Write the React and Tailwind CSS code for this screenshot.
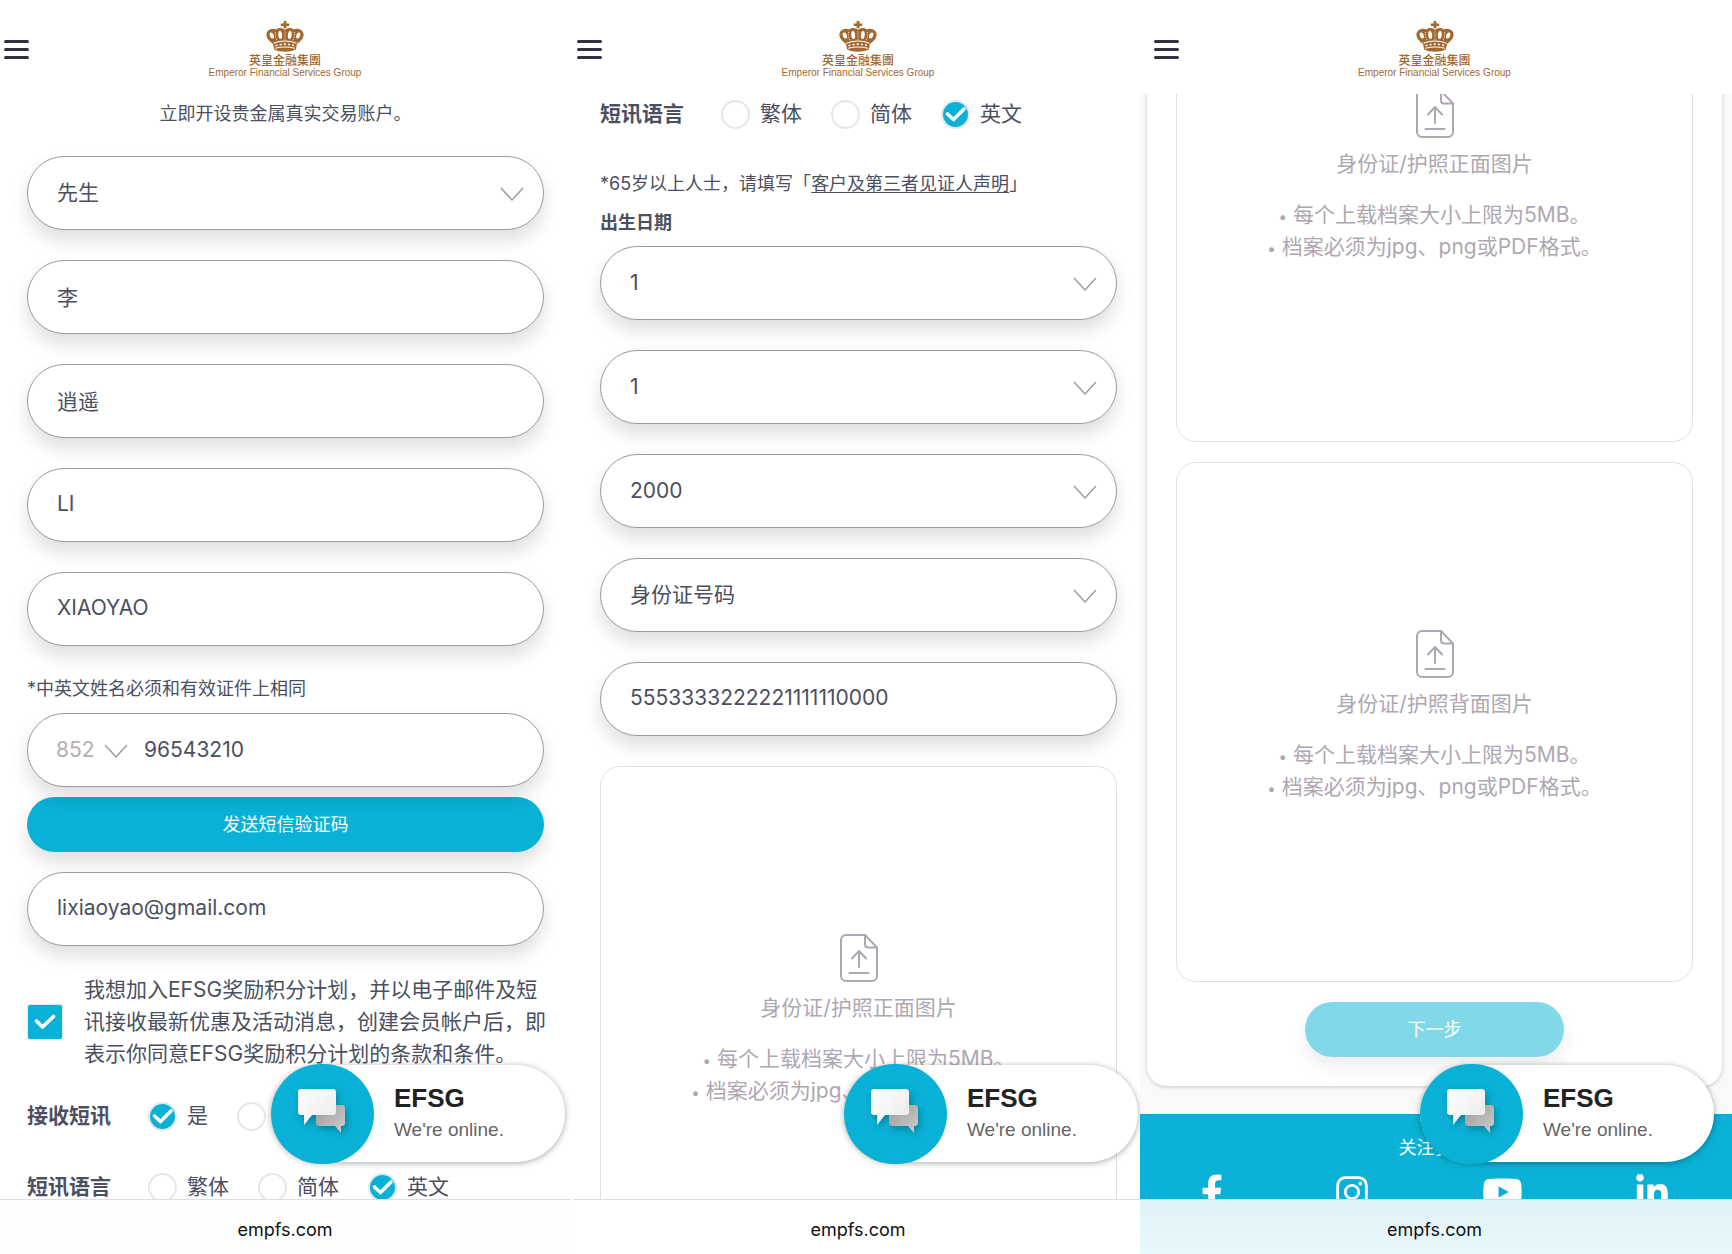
import { FaFacebookF, FaInstagram, FaYoutube, FaLinkedinIn } from "react-icons/fa";

function Crown() {
  return (
    <svg viewBox="0 0 38 31" className="h-[31px] w-[38px]" fill="#a3672f">
      <path d="M17.600 0h2.800v2.400h2.800v2.600h-2.800v2.200h-2.800V5h-2.800V2.400h2.800z" />
      {/* arches */}
      <path d="M19 9c-2-2-6-2.800-8.500-.5C7 7 2.500 7.800.8 11.500c-1.500 4 1.200 8 6.200 11.500l1.200 5.500c6 3 15.600 3 21.600 0L31 23c5-3.500 7.700-7.500 6.200-11.500C35.500 7.800 31 7 27.500 8.500C25 6.200 21 7 19 9z" />
      <g fill="#fff">
        <ellipse cx="5.800" cy="14.500" rx="1.900" ry="3.200" transform="rotate(-22 5.800 14.500)" />
        <ellipse cx="32.200" cy="14.500" rx="1.900" ry="3.200" transform="rotate(22 32.200 14.500)" />
        <ellipse cx="14.200" cy="14" rx="1.900" ry="4" transform="rotate(-6 14.200 14)" />
        <ellipse cx="23.800" cy="14" rx="1.900" ry="4" transform="rotate(6 23.800 14)" />
      </g>
      {/* pearls and band */}
      <g fill="none" stroke="#fff">
        <path d="M9.500 11c-.5 3 .2 6 1.500 8.500M28.500 11c.5 3-.2 6-1.500 8.500M19 10.500V19" strokeWidth=".8" strokeDasharray="1.200 1.200" />
        <path d="M7.500 22.300c7.500-3 15.500-3 23 0" strokeWidth="1.100" />
        <path d="M9.500 24.800c6.500-2.200 12.500-2.200 19 0" strokeWidth="1.600" strokeDasharray="2 2.200" />
        <path d="M9 27.300c6.500-1.800 13.500-1.800 20 0" strokeWidth="1" />
      </g>
    </svg>
  );
}

function Header({ className = "", menuClassName = "left-1" }) {
  return (
    <header className={`relative flex h-[94px] shrink-0 justify-center bg-white pt-[21px] text-[#a3672f] ${className}`}>
      <button type="button" aria-label="菜单" className={`absolute top-10 flex w-[25px] flex-col gap-[5px] ${menuClassName}`}>
        <span className="h-[3px] rounded-full bg-[#2d3142]" />
        <span className="h-[3px] rounded-full bg-[#2d3142]" />
        <span className="h-[3px] rounded-full bg-[#2d3142]" />
      </button>
      <a href="#home" className="flex flex-col items-center">
        <Crown />
        <span className="mt-[2px] text-[12px] leading-[14px] font-medium">英皇金融集團</span>
        <span className="font-['Liberation_Sans',sans-serif] text-[10px] leading-[10px]">Emperor Financial Services Group</span>
      </a>
    </header>
  );
}

function Chevron({ className }) {
  return (
    <svg viewBox="0 0 24 15" className={className} fill="none" stroke="#a098a4" strokeWidth="1.500">
      <path d="M1 1l11 12L23 1" />
    </svg>
  );
}

function SelectField({ label, value }) {
  return (
    <div className="relative">
      <select
        aria-label={label}
        defaultValue={value}
        className="h-[74px] w-full appearance-none rounded-full border border-[#a098a4] bg-white px-[29px] text-[21px] shadow-[0_10px_18px_rgba(0,0,0,0.13)]"
      >
        <option>{value}</option>
      </select>
      <Chevron className="pointer-events-none absolute top-[31px] right-5 h-[15px] w-6" />
    </div>
  );
}

function TextField({ label, value, type = "text" }) {
  return (
    <input
      type={type}
      aria-label={label}
      defaultValue={value}
      className="h-[74px] w-full rounded-full border border-[#a098a4] bg-white px-[29px] pb-[3px] text-[21px] shadow-[0_10px_18px_rgba(0,0,0,0.13)]"
    />
  );
}

function RadioRow({ label, name, options, checked }) {
  return (
    <fieldset className="flex h-8 items-center">
      <legend className="float-left mr-[37px] text-[21px] leading-8 font-bold">{label}</legend>
      <div className="flex gap-[29px]">
        {options.map((option) => (
          <label key={option} className="flex items-center gap-[10px] text-[21px] leading-8 whitespace-nowrap">
            <span className="relative flex size-[29px]">
              <input
                type="radio"
                name={name}
                defaultChecked={option === checked}
                className="size-full appearance-none rounded-full border-2 border-[#e2e8f0] checked:bg-[#08b1d5]"
              />
              {option === checked && (
                <svg viewBox="0 0 29 29" className="pointer-events-none absolute inset-0" fill="none" stroke="#fff" strokeWidth="3.600" strokeLinecap="round" strokeLinejoin="round">
                  <path d="M6.500 14l6 5.500L23 9" />
                </svg>
              )}
            </span>
            {option}
          </label>
        ))}
      </div>
    </fieldset>
  );
}

function UploadBox({ title }) {
  return (
    <label className="flex h-[520px] flex-col items-center rounded-[20px] border border-[#d9e2ec] bg-white pt-[167px] text-[21px] leading-8 text-[#aea7b2]">
      <input type="file" className="hidden" />
      <svg viewBox="0 0 38 48" className="h-12 w-[38px]" fill="none" stroke="#aea7b2" strokeWidth="2" strokeLinecap="round" strokeLinejoin="round">
        <path d="M25 1H6a5 5 0 0 0-5 5v36a5 5 0 0 0 5 5h26a5 5 0 0 0 5-5V13.500z" />
        <path d="M25 1v9.500a3 3 0 0 0 3 3h9" />
        <path d="M19 33V17.500M12 24.500l7-7.500 7 7.500M9.500 39h19" />
      </svg>
      <span className="mt-[10px]">{title}</span>
      <span className="mt-[19px] whitespace-nowrap"><span className="text-[15px] leading-none">•</span> 每个上载档案大小上限为5MB。</span>
      <span className="whitespace-nowrap"><span className="text-[15px] leading-none">•</span> 档案必须为jpg、png或PDF格式。</span>
    </label>
  );
}

function ChatWidget({ className }) {
  return (
    <button type="button" className={`absolute bottom-[92px] flex h-[97px] w-[294px] items-center rounded-full bg-white text-left font-['Liberation_Sans',sans-serif] shadow-[0_1px_6px_rgba(0,0,0,0.35)] ${className}`}>
      <span className="-my-1 flex h-[100px] w-[103px] shrink-0 items-center justify-center rounded-full bg-[#08b1d5]">
        <svg viewBox="0 0 60 56" className="h-14 w-[60px] drop-shadow-[2px_3px_3px_rgba(0,0,0,0.25)]">
          <defs>
            <linearGradient id="back" x1="0" y1="0" x2="1" y2="1">
              <stop offset="0" stopColor="#999" />
              <stop offset="1" stopColor="#d0d0d0" />
            </linearGradient>
            <linearGradient id="front" x1="0" y1="0" x2="1" y2="1">
              <stop offset="0" stopColor="#fff" />
              <stop offset="1" stopColor="#e9e9e9" />
            </linearGradient>
          </defs>
          <path d="M26 19h23q3 0 3 3v15q0 3-3 3h-1v7l-6-7H26q-3 0-3-3V22q0-3 3-3z" fill="url(#back)" />
          <path d="M8 3h32q3 0 3 3v20q0 3-3 3H19l-8 10V29H8q-3 0-3-3V6q0-3 3-3z" fill="url(#front)" />
        </svg>
      </span>
      <span className="ml-5 flex flex-col">
        <strong className="text-[26px] leading-8 text-[#222]">EFSG</strong>
        <span className="text-[19px] leading-8 text-[#666]">We're online.</span>
      </span>
    </button>
  );
}

function AddressBar({ className }) {
  return <footer className={`flex h-[55px] shrink-0 items-center justify-center border-t pt-1 text-[18px] text-[#111] ${className}`}>empfs.com</footer>;
}

function PersonalScreen() {
  return (
    <section className="relative flex min-w-0 flex-col bg-white pr-[3px]">
      <Header />
      <main className="min-h-0 flex-1 overflow-hidden pr-[26px] pl-[27px]">
        <p className="mt-1 text-center text-[18px] leading-8">立即开设贵金属真实交易账户。</p>
        <div className="mt-[26px] flex flex-col gap-[30px]">
          <SelectField label="称谓" value="先生" />
          <TextField label="中文姓氏" value="李" />
          <TextField label="中文名字" value="逍遥" />
          <TextField label="英文姓氏" value="LI" />
          <TextField label="英文名字" value="XIAOYAO" />
        </div>
        <p className="mt-[27px] text-[18px] leading-8">*中英文姓名必须和有效证件上相同</p>
        <div className="relative z-10 mt-2 flex h-[74px] items-center rounded-full border border-[#a098a4] bg-white pl-7 shadow-[0_10px_18px_rgba(0,0,0,0.13)]">
          <select aria-label="区号" defaultValue="852" className="w-[74px] appearance-none text-[21px] text-[#b5aeb8]">
            <option>852</option>
          </select>
          <Chevron className="pointer-events-none absolute top-[30px] left-[76px] h-[15px] w-6" />
          <input type="tel" aria-label="手机号码" defaultValue="96543210" className="ml-[14px] min-w-0 flex-1 text-[21px]" />
        </div>
        <button type="button" className="mt-[10px] h-[55px] w-full rounded-full bg-[#08b1d5] text-[18px] text-white shadow-[0_10px_18px_rgba(0,0,0,0.13)]">
          发送短信验证码
        </button>
        <div className="mt-5">
          <TextField label="电邮" type="email" value="lixiaoyao@gmail.com" />
        </div>
        <label className="mt-7 flex items-center gap-[21px] text-[21px] leading-8 whitespace-nowrap">
          <span className="relative flex size-9 shrink-0">
            <input type="checkbox" defaultChecked className="size-full appearance-none rounded-[3px] border border-[#e2e8f0] checked:bg-[#08b1d5]" />
            <svg viewBox="0 0 36 36" className="pointer-events-none absolute inset-0" fill="none" stroke="#fff" strokeWidth="3.600" strokeLinecap="round" strokeLinejoin="round">
              <path d="M9.500 17l6 6L26.500 12.500" />
            </svg>
          </span>
          <span>
            我想加入EFSG奖励积分计划，并以电子邮件及短
            <br />
            讯接收最新优惠及活动消息，创建会员帐户后，即
            <br />
            表示你同意EFSG奖励积分计划的条款和条件。
          </span>
        </label>
        <div className="mt-[30px] flex flex-col gap-[39px]">
          <RadioRow label="接收短讯" name="sms" options={["是", "否"]} checked="是" />
          <RadioRow label="短讯语言" name="sms-language" options={["繁体", "简体", "英文"]} checked="英文" />
        </div>
      </main>
      <AddressBar className="border-[#dedede] bg-[#fcfdfd]" />
      <ChatWidget className="right-2" />
    </section>
  );
}

function IdentityScreen() {
  return (
    <section className="relative flex min-w-0 flex-col bg-white">
      <Header className="pl-[3px]" />
      <main className="min-h-0 flex-1 overflow-hidden pr-[23px] pl-[27px]">
        <div className="mt-1">
          <RadioRow label="短讯语言" name="language" options={["繁体", "简体", "英文"]} checked="英文" />
        </div>
        <p className="mt-[38px] text-[18px] leading-8">
          *65岁以上人士，请填写「<a href="#declaration" className="underline underline-offset-2">客户及第三者见证人声明</a>」
        </p>
        <p className="mt-[7px] text-[18px] leading-8 font-bold">出生日期</p>
        <div className="mt-[7px] flex flex-col gap-[30px]">
          <SelectField label="日" value="1" />
          <SelectField label="月" value="1" />
          <SelectField label="年" value="2000" />
          <SelectField label="证件类型" value="身份证号码" />
          <TextField label="证件号码" value="5553333222221111110000" />
          <UploadBox title="身份证/护照正面图片" />
        </div>
      </main>
      <AddressBar className="border-[#dedede] bg-white pl-[3px]" />
      <ChatWidget className="right-[2px]" />
    </section>
  );
}

function UploadScreen() {
  return (
    <section className="relative flex min-w-0 flex-col bg-white">
      <Header menuClassName="left-[14px]" className="pr-[3px]" />
      <main className="min-h-0 flex-1 overflow-hidden bg-[#f9f9f9]">
        {/* page is scrolled down, so the first box runs under the header */}
        <div className="-mt-[172px] mr-[10px] ml-[7px] flex flex-col gap-5 rounded-[20px] bg-white px-[29px] pb-[29px] shadow-[0_1px_4px_rgba(0,0,0,0.2)]">
          <UploadBox title="身份证/护照正面图片" />
          <UploadBox title="身份证/护照背面图片" />
          <button type="button" disabled className="h-[55px] w-1/2 self-center rounded-full bg-[#80d8e9] text-[18px] text-white shadow-[0_10px_18px_rgba(0,0,0,0.07)]">
            下一步
          </button>
        </div>
        <div className="mt-7 bg-[#08b1d5] pt-[18px] pr-16 pb-8 pl-[61px] text-white">
          <p className="text-center text-[18px] leading-8">关注我们</p>
          <div className="mt-[10px] flex items-center justify-between">
            <a href="#facebook" aria-label="Facebook"><FaFacebookF className="h-9 w-[22px]" /></a>
            <a href="#instagram" aria-label="Instagram"><FaInstagram className="h-9 w-8" /></a>
            <a href="#youtube" aria-label="YouTube"><FaYoutube className="h-9 w-[41px]" /></a>
            <a href="#linkedin" aria-label="LinkedIn"><FaLinkedinIn className="h-9 w-8" /></a>
          </div>
        </div>
      </main>
      <AddressBar className="border-[#c9dde2] bg-linear-to-b from-[#dff2f7] to-[#e9f8fc] pr-[3px]" />
      <ChatWidget className="right-[18px]" />
    </section>
  );
}

export default function App() {
  return (
    <div className="grid h-screen grid-cols-[573fr_567fr_592fr] grid-rows-1 overflow-hidden bg-white font-[Inter,'Noto_Sans_CJK_SC',sans-serif] text-[#4b4f5f]" lang="zh-CN">
      <PersonalScreen />
      <IdentityScreen />
      <UploadScreen />
    </div>
  );
}
